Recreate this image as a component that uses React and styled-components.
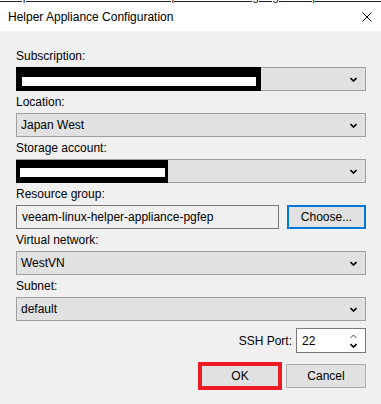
import React from 'react';
import styled, { createGlobalStyle } from 'styled-components';

const GlobalStyle = createGlobalStyle`
  html, body {
    margin: 0;
    padding: 0;
    background: #ffffff;
  }
  body {
    font-family: "Liberation Sans", Arial, sans-serif;
    font-size: 12px;
    color: #000000;
  }
`;

const Dialog = styled.div`
  width: 381px;
  height: 404px;
  display: flex;
  flex-direction: column;
  background: #f0f0f0;
  overflow: hidden;
`;

// the page behind the dialog, only its last pixels show
const PageBehind = styled.div`
  height: 3px;
  overflow: hidden;
  background: #ffffff;
  font-size: 12px;
  line-height: 14px;
  color: #222;
  white-space: nowrap;

  span {
    display: block;
    margin-top: -11px;
    text-decoration: underline;
  }
`;

const TitleBar = styled.div`
  height: 28px;
  background: #ffffff;
  display: flex;
  align-items: center;
  justify-content: space-between;
  padding: 0 9px 0 8px;
`;

const Title = styled.div`
  font-size: 12px;
  color: #000;
`;

const CloseIcon = styled.svg`
  width: 10px;
  height: 10px;
`;

const Body = styled.div`
  flex: 1;
  display: flex;
  flex-direction: column;
  padding: 17px 15px 0 16px;
`;

const Fields = styled.div`
  display: flex;
  flex-direction: column;
  gap: 3px;
`;

const Group = styled.div`
  display: flex;
  flex-direction: column;
  gap: 3px;
`;

const Label = styled.div`
  height: 16px;
  line-height: 16px;
`;

const Combo = styled.div`
  height: 24px;
  box-sizing: border-box;
  border: 1px solid #a0a0a0;
  background: #e1e1e1;
  display: flex;
  align-items: center;
  padding-left: 4px;
  padding-right: 8px;
`;

const ComboText = styled.div`
  flex: 1;
`;

const Redact = styled.div`
  width: ${(p) => p.$w}px;
  align-self: stretch;
  margin: ${(p) => p.$top}px 0 -1px -5px;
  background: #000000;
  box-sizing: border-box;
  padding: ${(p) => p.$padTop}px ${(p) => p.$padX}px 0 ${(p) => p.$padX + 1}px;

  div {
    height: 9px;
    background: #ffffff;
  }
`;

const Spacer = styled.div`
  flex: 1;
`;

const Row = styled.div`
  display: flex;
  gap: 8px;
`;

const TextBox = styled.div`
  flex: 1;
  height: 24px;
  box-sizing: border-box;
  border: 1px solid #7a7a7a;
  background: #f0f0f0;
  display: flex;
  align-items: center;
  padding-left: 5px;
`;

const Button = styled.button`
  width: ${(p) => p.$w || 80}px;
  height: 24px;
  box-sizing: border-box;
  border: ${(p) => (p.$focused ? '2px solid #0078d7' : '1px solid #adadad')};
  background: #e1e1e1;
  font-family: inherit;
  font-size: 12px;
  color: #000;
  padding: 0;
  outline: ${(p) => (p.$marked ? '4px solid #ed1c24' : 'none')};
  outline-offset: -2px;
`;

const PortRow = styled.div`
  display: flex;
  justify-content: flex-end;
  align-items: center;
  gap: 4px;
  margin-top: 7px;
`;

const Spin = styled.div`
  width: 70px;
  height: 25px;
  box-sizing: border-box;
  border: 1px solid #7a7a7a;
  background: #ffffff;
  display: flex;
  align-items: center;
  padding: 0 8px 0 5px;
`;

const SpinArrows = styled.div`
  display: flex;
  flex-direction: column;
  gap: 4px;
`;

const ButtonRow = styled.div`
  display: flex;
  justify-content: flex-end;
  gap: 6px;
  margin-top: 11px;
`;

const Chevron = ({ up }) => (
  <svg width="7" height="5" viewBox="0 0 7 5">
    <path
      d={up ? 'M0.5 4 L3.5 1 L6.5 4' : 'M0.5 1 L3.5 4 L6.5 1'}
      fill="none"
      stroke={up ? '#444' : '#000'}
      strokeWidth={up ? 1 : 1.6}
    />
  </svg>
);

function ComboBox({ children }) {
  return (
    <Combo>
      <ComboText>{children}</ComboText>
      <Chevron />
    </Combo>
  );
}

export default function App() {
  return (
    <Dialog>
      <GlobalStyle />
      <PageBehind>
        <span>components in that case this step select the language and press on Enable to quickly do the setup</span>
      </PageBehind>
      <TitleBar>
        <Title>Helper Appliance Configuration</Title>
        <CloseIcon viewBox="0 0 10 10">
          <path d="M0.5 0.5 L9.5 9.5 M9.5 0.5 L0.5 9.5" stroke="#000" strokeWidth="1" />
        </CloseIcon>
      </TitleBar>
      <Body>
        <Fields>
          <Group>
            <Label>Subscription:</Label>
            <Combo>
              <Redact $w={245} $top={-1} $padTop={10} $padX={5}>
                <div />
              </Redact>
              <Spacer />
              <Chevron />
            </Combo>
          </Group>
          <Group>
            <Label>Location:</Label>
            <ComboBox>Japan West</ComboBox>
          </Group>
          <Group>
            <Label>Storage account:</Label>
            <Combo>
              <Redact $w={152} $top={0} $padTop={8} $padX={3}>
                <div />
              </Redact>
              <Spacer />
              <Chevron />
            </Combo>
          </Group>
          <Group>
            <Label>Resource group:</Label>
            <Row>
              <TextBox>veeam-linux-helper-appliance-pgfep</TextBox>
              <Button $w={79} $focused>Choose...</Button>
            </Row>
          </Group>
          <Group>
            <Label>Virtual network:</Label>
            <ComboBox>WestVN</ComboBox>
          </Group>
          <Group>
            <Label>Subnet:</Label>
            <ComboBox>default</ComboBox>
          </Group>
        </Fields>
        <PortRow>
          <span>SSH Port:</span>
          <Spin>
            <ComboText>22</ComboText>
            <SpinArrows>
              <Chevron up />
              <Chevron up={false} />
            </SpinArrows>
          </Spin>
        </PortRow>
        <ButtonRow>
          <Button $marked>OK</Button>
          <Button>Cancel</Button>
        </ButtonRow>
      </Body>
    </Dialog>
  );
}
